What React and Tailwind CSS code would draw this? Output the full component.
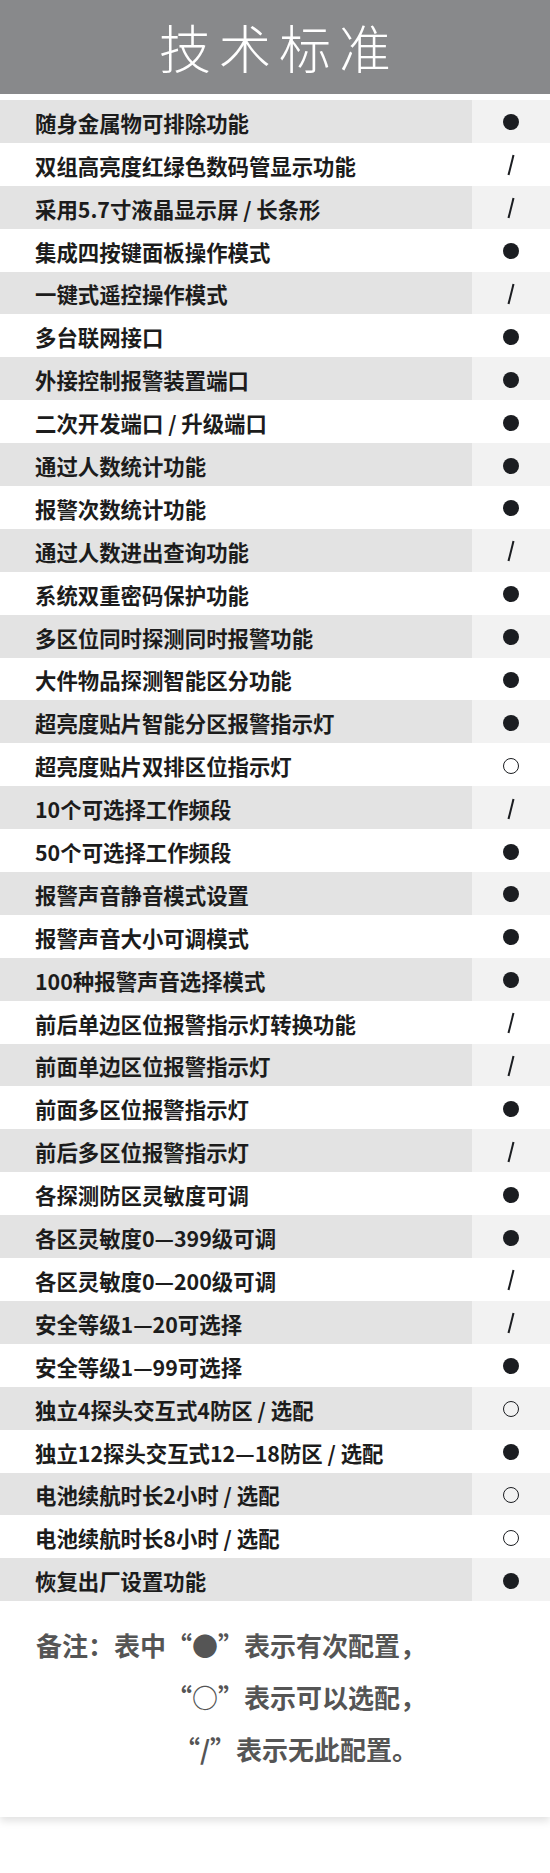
import React from "react";

const F = "●";
const O = "○";
const S = "/";

const rows = [
  ["随身金属物可排除功能", F],
  ["双组高亮度红绿色数码管显示功能", S],
  ["采用5.7寸液晶显示屏 / 长条形", S],
  ["集成四按键面板操作模式", F],
  ["一键式遥控操作模式", S],
  ["多台联网接口", F],
  ["外接控制报警装置端口", F],
  ["二次开发端口 / 升级端口", F],
  ["通过人数统计功能", F],
  ["报警次数统计功能", F],
  ["通过人数进出查询功能", S],
  ["系统双重密码保护功能", F],
  ["多区位同时探测同时报警功能", F],
  ["大件物品探测智能区分功能", F],
  ["超亮度贴片智能分区报警指示灯", F],
  ["超亮度贴片双排区位指示灯", O],
  ["10个可选择工作频段", S],
  ["50个可选择工作频段", F],
  ["报警声音静音模式设置", F],
  ["报警声音大小可调模式", F],
  ["100种报警声音选择模式", F],
  ["前后单边区位报警指示灯转换功能", S],
  ["前面单边区位报警指示灯", S],
  ["前面多区位报警指示灯", F],
  ["前后多区位报警指示灯", S],
  ["各探测防区灵敏度可调", F],
  ["各区灵敏度0—399级可调", F],
  ["各区灵敏度0—200级可调", S],
  ["安全等级1—20可选择", S],
  ["安全等级1—99可选择", F],
  ["独立4探头交互式4防区 / 选配", O],
  ["独立12探头交互式12—18防区 / 选配", F],
  ["电池续航时长2小时 / 选配", O],
  ["电池续航时长8小时 / 选配", O],
  ["恢复出厂设置功能", F],
];

function Mark({ type }) {
  if (type === F) return <span className="block w-[16px] h-[16px] rounded-full bg-[#1b1d21]" />;
  if (type === O) return <span className="block w-[16px] h-[16px] rounded-full border-[1.5px] border-[#1b1d21]" />;
  return (
    <svg width="8" height="22" viewBox="0 0 8 22">
      <line x1="6.5" y1="1" x2="1.5" y2="21" stroke="#1b1d21" strokeWidth="2" />
    </svg>
  );
}

export default function App() {
  return (
    <div className="w-[550px] min-h-[1873px] bg-white" style={{ fontFamily: '"Noto Sans CJK SC", "Noto Sans", sans-serif' }}>
      <div className="shadow-[0_4px_8px_rgba(0,0,0,0.12)] bg-white">
        {/* header */}
        <div className="h-[94px] bg-[#88898b] flex items-center justify-center">
          <h1 className="text-white text-[52px] font-extralight tracking-[8px] pl-[8px] leading-none">技术标准</h1>
        </div>
        <div className="h-[6px]" />

        {/* table */}
        <div>
          {rows.map(([text, mark], i) => (
            <div key={i} className="flex h-[42.9px]">
              <div
                className={
                  "w-[472px] flex items-center pl-[35px] pt-[3px] text-[21.4px] font-bold text-[#1c1c1c] " +
                  (i % 2 === 0 ? "bg-[#e3e3e3]" : "bg-white")
                }
              >
                {text}
              </div>
              <div className={"flex-1 flex items-center justify-center pt-[2px] " + (i % 2 === 0 ? "bg-[#f2f2f2]" : "bg-white")}>
                <Mark type={mark} />
              </div>
            </div>
          ))}
        </div>

        {/* note */}
        <div className="pt-[18px] pb-[42px] pl-[36px]">
          <div className="inline-block text-right text-[26px] font-bold text-[#555555] leading-[52px]">
            <p>备注：表中“●”表示有次配置，</p>
            <p>“○”表示可以选配，</p>
            <p className="pr-[8px]">“/”表示无此配置。</p>
          </div>
        </div>
      </div>
    </div>
  );
}
